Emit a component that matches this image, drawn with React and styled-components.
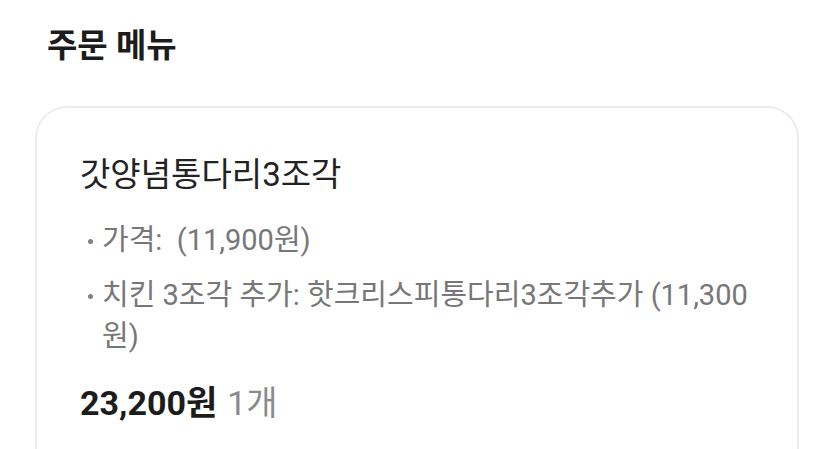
import React from 'react';
import styled, { createGlobalStyle } from 'styled-components';

const GlobalStyle = createGlobalStyle`
  html, body {
    margin: 0;
    padding: 0;
    background: #ffffff;
  }
  body {
    font-family: Roboto, "Noto Sans CJK KR", sans-serif;
    -webkit-font-smoothing: antialiased;
  }
`;

const Page = styled.div`
  padding: 22px 35px 0 35px;
  height: 449px;
  overflow: hidden;
  box-sizing: border-box;
`;

const SectionTitle = styled.h2`
  margin: 0 0 0 12px;
  font-size: 33px;
  font-weight: 700;
  line-height: 48px;
  color: #1c1c1c;
`;

const Card = styled.div`
  margin-top: 36px;
  width: 764px;
  box-sizing: border-box;
  border: 2px solid #ececec;
  border-bottom: none;
  border-radius: 32px 32px 0 0;
  padding: 45px 43px 40px 43px;
  min-height: 400px;
`;

const MenuName = styled.div`
  font-size: 33px;
  line-height: 44px;
  color: #222;
`;

const OptionList = styled.ul`
  list-style: none;
  margin: 23px 0 0 0;
  padding: 0;
  display: flex;
  flex-direction: column;
  gap: 14px;
`;

const Option = styled.li`
  display: flex;
  font-size: 29px;
  line-height: 41px;
  color: #777;
`;

const Bullet = styled.span`
  flex: none;
  width: 22px;
  height: 41px;
  display: flex;
  align-items: center;
  padding-left: 8px;
  box-sizing: border-box;
  &::before {
    content: '';
    width: 5px;
    height: 5px;
    border-radius: 50%;
    background: #808080;
    margin-top: 1px;
  }
`;

const OptionText = styled.span`
  white-space: pre-wrap;
`;

const Total = styled.div`
  margin-top: 24px;
  font-size: 34px;
  line-height: 44px;
  color: #1c1c1c;
`;

const Price = styled.span`
  font-weight: 700;
`;

const Quantity = styled.span`
  color: #8a8a8a;
  margin-left: 10px;
`;

const options = [
  '가격:  (11,900원)',
  '치킨 3조각 추가: 핫크리스피통다리3조각추가 (11,300원)',
];

export default function App() {
  return (
    <>
      <GlobalStyle />
      <Page>
        <SectionTitle>주문 메뉴</SectionTitle>
        <Card>
          <MenuName>갓양념통다리3조각</MenuName>
          <OptionList>
            {options.map((text) => (
              <Option key={text}>
                <Bullet />
                <OptionText>{text}</OptionText>
              </Option>
            ))}
          </OptionList>
          <Total>
            <Price>23,200원</Price>
            <Quantity>1개</Quantity>
          </Total>
        </Card>
      </Page>
    </>
  );
}
